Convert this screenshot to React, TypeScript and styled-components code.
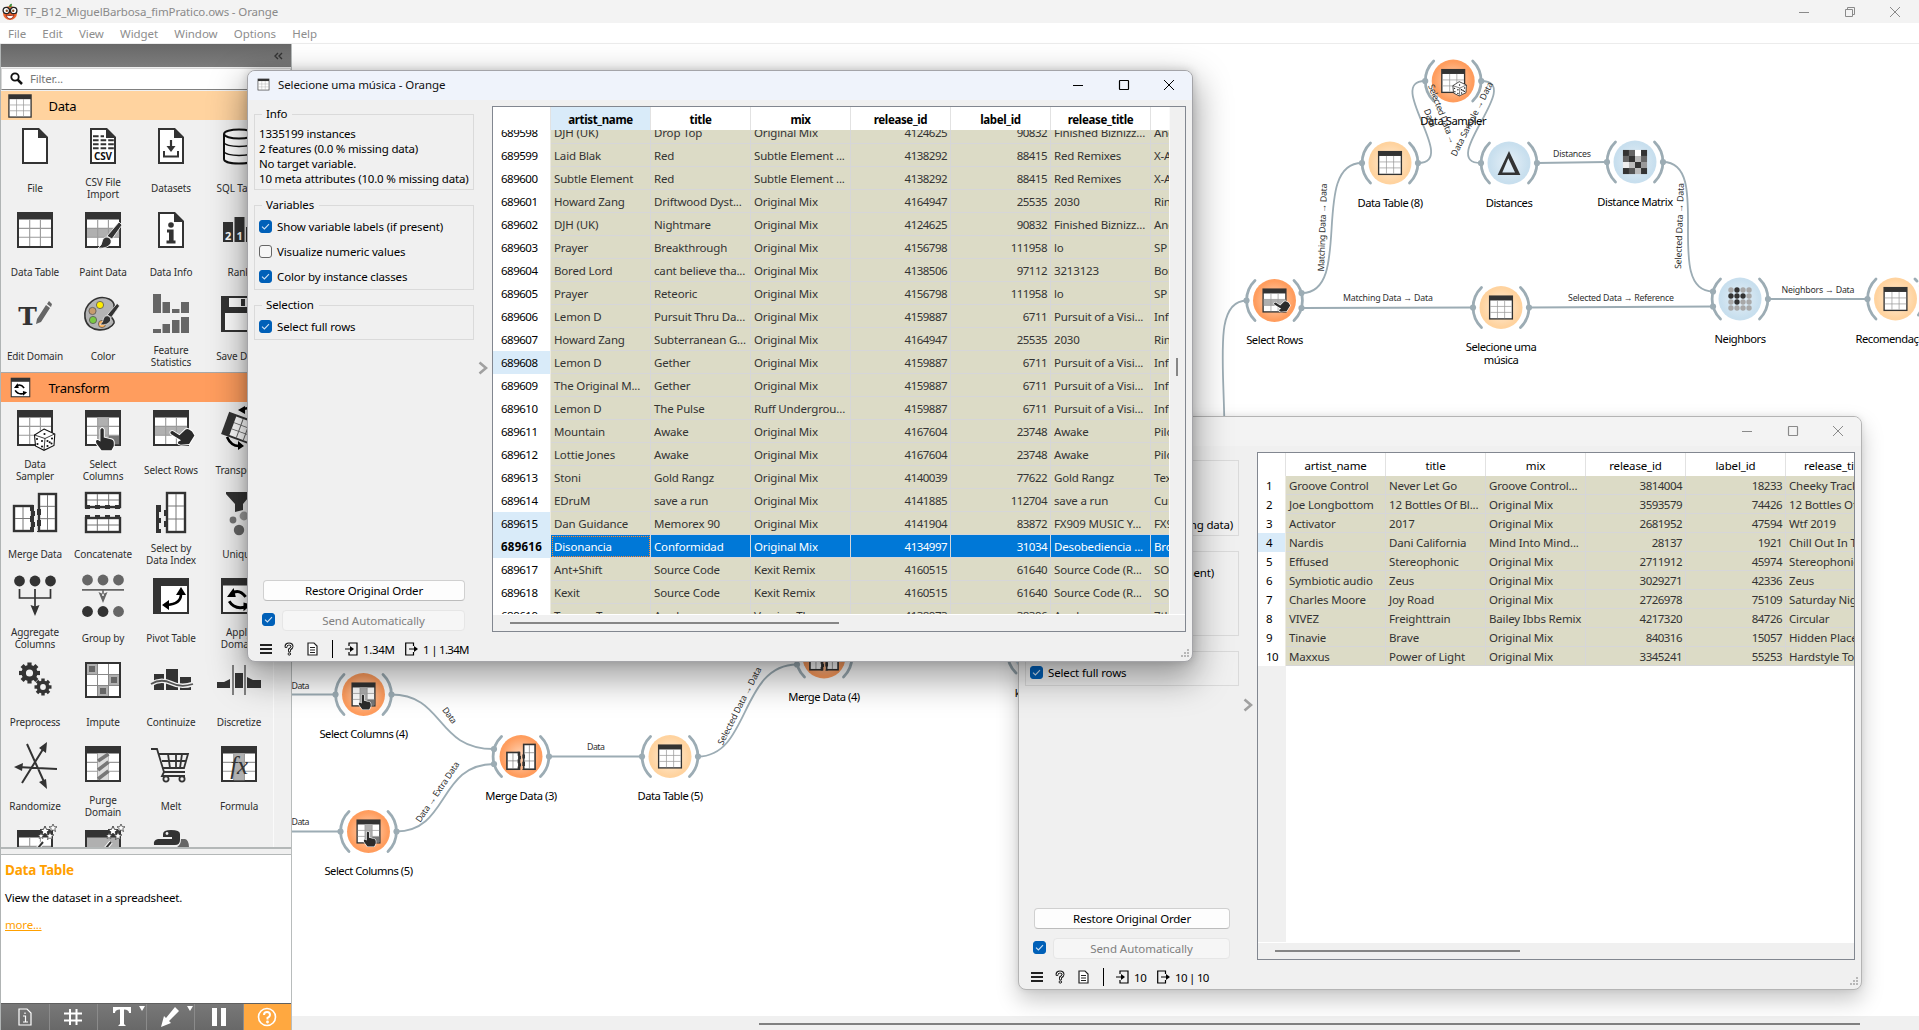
import React from "react";
import styled, { createGlobalStyle, css } from "styled-components";

const INK = "#333333";
const LINK = "#9cacb4";

const GlobalStyle = createGlobalStyle`
  * { box-sizing: border-box; }
  body {
    margin: 0;
    overflow: hidden;
    font-family: "Noto Sans", "Open Sans", sans-serif;
    font-size: 11.5px;
    letter-spacing: -0.2px;
    color: #000;
    background: #fff;
  }
`;

/* ---------- glyph helpers ---------- */

type Cell = [number, number, string];

function TableGlyph({ fills = [], grid = "#9a9a9a" }: { fills?: Cell[]; grid?: string }) {
  const xs = [-16, -5.2, 5.4];
  const ys = [-10.5, -1.5, 7.5];
  return (
    <g>
      <rect x={-18} y={-18} width={36} height={36} fill={INK} />
      <rect x={-16} y={-10.5} width={32} height={26.5} fill="#fff" />
      {fills.map(([c, r, f], i) => (
        <rect key={i} x={xs[c]} y={ys[r]} width={10.8} height={8.8} fill={f} />
      ))}
      <path d="M-5.3-10.5V16M5.4-10.5V16M-16-1.6H16M-16 7.3H16" stroke={grid} strokeWidth={1.1} />
    </g>
  );
}

const PageGlyph = () => (
  <g>
    <path d="M-13-18H4L13-9V18H-13Z" fill={INK} />
    <path d="M-11-16H3V-8H11V16H-11Z" fill="#fff" />
    <path d="M3-18L13-8H3Z" fill={INK} />
  </g>
);

const Hand = ({ t }: { t: string }) => (
  <path
    transform={t}
    d="M-2.6 1.5Q-1-1.5.8 1.5V9.5L7 11Q11 11.5 10.8 15V18L8.5 22.3H-1.5L-6.5 15.5Q-8 11.5-5 12L-2.6 13.5Z"
    fill="#2b2b2b"
    stroke="#fff"
    strokeWidth={1.8}
    style={{ paintOrder: "stroke" }}
  />
);

const Brush = ({ t }: { t?: string }) => (
  <g transform={t}>
    <path d="M16-8L19-5L9 9L4 6Z" fill={INK} stroke="#fff" strokeWidth={0.8} />
    <path d="M4 7Q9 8 8 13Q5 19-5 18Q-1 15-1 12Q0 7 4 7Z" fill={INK} stroke="#fff" strokeWidth={0.8} />
  </g>
);

const Dice = () => (
  <g transform="translate(9 11.500)">
    <path d="M0-10.5L10.8-5.5L10 6L0 10.8L-9-6.500L0-10.500ZM-9-6.500L-8.500 6.500L0 10.800" fill="#fff" />
    <path d="M0-10.500L10.800-5.500L10 6L0 10.800L-8.500 6.500L-9.500-4.500Z" fill="#fff" stroke="#111" strokeWidth={1.100} />
    <path d="M-9.5-4.5L1-1L10.5-5.5M1-1L0 10.5" fill="none" stroke="#111" strokeWidth={0.8} />
    {[[0.5, -5.5], [-7, -0.5], [-2, 1.5], [-6.5, 4.5], [-2, 7], [3.5, 1.5], [8, -1], [3.5, 6.5], [7.5, 4], [5.7, 2.7]].map(([x, y], i) => (
      <circle key={i} cx={x} cy={y} r={1.05} fill="#111" />
    ))}
  </g>
);

const CycleArrows = ({ t }: { t?: string }) => (
  <g transform={t} fill="none" stroke="#000" strokeWidth={2.6}>
    <path d="M-6-4Q1-9 7-1" />
    <path d="M7 8Q-3 11-8 3" />
    <path d="M-10-1L-4-9L-2-1ZM12 6L5 4L5 12Z" fill="#000" stroke="none" />
  </g>
);

const Notched = ({ x, y, w, h, cols, rows }: { x: number; y: number; w: number; h: number; cols: number; rows: number }) => (
  <g>
    <rect x={x} y={y} width={w} height={h} fill="#fff" stroke={INK} strokeWidth={2.4} />
    {Array.from({ length: cols - 1 }, (_, i) => (
      <path key={"c" + i} d={`M${x + (w * (i + 1)) / cols} ${y + 1}v${h - 2}`} stroke="#777" />
    ))}
    {Array.from({ length: rows - 1 }, (_, i) => (
      <path key={"r" + i} d={`M${x + 1} ${y + (h * (i + 1)) / rows}h${w - 2}`} stroke="#777" />
    ))}
  </g>
);

const MergeGlyph = () => (
  <g>
    <Notched x={-21} y={-6} w={18} h={25} cols={2} rows={2} />
    <Notched x={4} y={-18} w={17} h={37} cols={2} rows={3} />
    <path d="M-3-7V20M4-3V20" stroke={INK} strokeWidth={4} strokeDasharray="6 5" />
    <path d="M-4-1h4v5h-4zM-4 10h4v5h-4z" fill={INK} />
  </g>
);

const Gear = ({ x, y, r }: { x: number; y: number; r: number }) => (
  <g transform={`translate(${x} ${y})`}>
    {Array.from({ length: 4 }, (_, i) => (
      <rect key={i} x={-r * 0.2} y={-r} width={r * 0.4} height={r * 2} fill={INK} transform={`rotate(${i * 45})`} />
    ))}
    <circle r={r * 0.76} fill={INK} />
    <circle r={r * 0.34} fill="#f0f0f0" />
  </g>
);

const Stars = () => (
  <g fill="#fff" stroke={INK} strokeWidth={0.9}>
    {[[10, -17, 5], [18, -20, 4], [15, -12, 4], [6, -12, 3]].map(([x, y, r], i) => (
      <path
        key={i}
        transform={`translate(${x} ${y}) scale(${r / 5})`}
        d="M0-5L1.5-1.6L5-1.5L2.2.8L3.2 4.4L0 2.4L-3.2 4.4L-2.2.8L-5-1.5L-1.5-1.6Z"
      />
    ))}
    <path d="M8-6L-2 6" stroke="#fff" strokeWidth={4} />
    <path d="M8-6L-2 6" stroke={INK} strokeWidth={2} />
  </g>
);

const glyphs: Record<string, React.ReactNode> = {
  file: <PageGlyph />,
  csv: (
    <g>
      <PageGlyph />
      <path d="M-10-9.7H1M-10-5.7H11M-10-1.7H11M-10 2.3H11" stroke={INK} strokeWidth={2} strokeDasharray="5.6 2" />
      <text y={14.2} textAnchor="middle" fontSize={10} fontWeight={700} fill="#111" letterSpacing={-0.2}>CSV</text>
    </g>
  ),
  datasets: (
    <g>
      <PageGlyph />
      <path d="M-7 5V10.5H7V5" fill="none" stroke={INK} strokeWidth={2} />
      <path d="M0-6V3" stroke={INK} strokeWidth={2.2} />
      <path d="M-4.5 0H4.5L0 6Z" fill={INK} />
    </g>
  ),
  sql: (
    <g fill="#fff" stroke="#111" strokeWidth={2}>
      <path d="M-15-12V13C-15 19 15 19 15 13V-12" />
      <ellipse cy={-12} rx={15} ry={4.5} />
      <path d="M-15-4C-15 2 15 2 15-4M-15 5C-15 11 15 11 15 5" fill="none" strokeWidth={1.4} />
    </g>
  ),
  table: <TableGlyph />,
  paint: (
    <g>
      <TableGlyph fills={[[0, 1, "#b0b0b0"], [1, 1, "#b0b0b0"], [2, 1, "#b0b0b0"]]} />
      <Brush />
    </g>
  ),
  info: (
    <g>
      <PageGlyph />
      <circle cy={-5} r={2.8} fill={INK} />
      <path d="M-4-.5H2.6V10.5H4.5V13.5H-4.5V10.5H-2V2.5H-4Z" fill={INK} />
    </g>
  ),
  rank: (
    <g fill={INK}>
      <path d="M-16-8H-6V12H-16ZM-4.500-13H5.500V12H-4.500ZM7-3H17V12H7Z" />
      <g fill="#fff" fontSize={11} fontWeight={700} textAnchor="middle">
        <text x={-11} y={9.5}>2</text>
        <text x={0.5} y={9.5}>1</text>
        <text x={12} y={9.5}>3</text>
      </g>
    </g>
  ),
  editDomain: (
    <g>
      <text x={-7.500} y={11} textAnchor="middle" fontFamily="DejaVu Serif, serif" fontWeight={700} fontSize={25} fill={INK}>T</text>
      <path d="M2 5L11-9L15-6L6 8L1 10ZM12-10L14-13L17-10L16-7Z" fill="#666" />
    </g>
  ),
  color: (
    <g>
      <path d="M-18 4C-20-10-6-20 6-15C14-11 11-4 8-2C4 2 12 4 11 9C7 18-15 20-18 4Z" fill="#b4b4b4" stroke="#333" strokeWidth={1.6} />
      <circle cx={-3} cy={-9} r={3.6} fill="#ffed00" stroke="#555" strokeWidth={0.8} />
      <circle cx={-10.500} cy={-3} r={3.6} fill="#c69c6d" stroke="#555" strokeWidth={0.8} />
      <circle cx={-10} cy={6} r={3.6} fill="#7ac943" stroke="#555" strokeWidth={0.8} />
      <circle cx={-1} cy={10} r={3.6} fill="#ffb055" stroke="#555" strokeWidth={0.8} />
      <Brush t="translate(1 -4) scale(.82)" />
    </g>
  ),
  stats: (
    <path d="M-18-20H-10V-1H-18ZM-8.500-12H-1V-1H-8.500ZM1-5H8.500V-1H1ZM10-12H18V-1H10ZM-18 15H-10V19H-18ZM-8.500 10H-1V19H-8.500ZM1 6H8.500V19H1ZM10 3H18V19H10Z" fill="#666" />
  ),
  save: (
    <g>
      <path d="M-18-18H14L18-14V18H-18Z" fill={INK} />
      <path d="M-10-16H10V-7H-10ZM-14-1H14V16H-14Z" fill="#fff" />
      <path d="M2-15H6V-8H2Z" fill={INK} />
    </g>
  ),
  sampler: (
    <g>
      <TableGlyph />
      <Dice />
    </g>
  ),
  selectCols: (
    <g>
      <TableGlyph fills={[[1, 0, "#b0b0b0"], [1, 1, "#b0b0b0"], [1, 2, "#b0b0b0"], [2, 2, "#777"]]} />
      <Hand t="" />
    </g>
  ),
  selectRows: (
    <g>
      <TableGlyph fills={[[0, 1, "#b0b0b0"], [1, 1, "#b0b0b0"], [2, 1, "#b0b0b0"]]} />
      <Hand t="translate(0 3) rotate(-58)" />
    </g>
  ),
  transpose: (
    <g>
      <g transform="rotate(20) scale(.82 .66)">
        <rect x={-18} y={-18} width={40} height={36} fill={INK} />
        <path d="M-8-15H20V15H-8Z" fill="#fff" />
        <path d="M1-15V15M10-15V15M-8-5H20M-8 5H20" stroke="#666" strokeWidth={1.2} />
      </g>
      <path d="M15-17Q8-22 4-18M-12 9Q-8 18 0 18" fill="none" stroke="#000" strokeWidth={2.6} />
      <path d="M-1-18L6-22L6-14ZM5 18L-1 13L-1 22Z" />
    </g>
  ),
  merge: <MergeGlyph />,
  concat: (
    <g>
      <Notched x={-17} y={-19} w={34} h={14} cols={3} rows={2} />
      <Notched x={-17} y={6} w={34} h={14} cols={3} rows={2} />
      <path d="M-18-5H18M-18 5H18" stroke={INK} strokeWidth={4} strokeDasharray="5 5" />
      <path d="M-15-2H15M-13 2H15" stroke="#f0f0f0" strokeWidth={2} />
    </g>
  ),
  byIndex: (
    <g>
      <Notched x={-4} y={-19} w={18} h={39} cols={2} rows={3} />
      <path d="M-15-7V21H-10V17H-12V11H-10V6H-12V0H-10V-7Z" fill={INK} />
      <path d="M-7-2h4v6h-4zM-7 9h4v6h-4z" fill={INK} />
    </g>
  ),
  unique: (
    <g>
      <path d="M-13-20H14L4-8V-2L-4 0V-8L-13-18Z" fill={INK} />
      <circle cx={-6} cy={8} r={3.4} fill="#777" />
      <circle cx={5} cy={4} r={4.4} fill="#999" />
      <circle cx={0} cy={18} r={5.2} fill="#666" />
    </g>
  ),
  aggregate: (
    <g>
      <g fill={INK}>
        <circle cx={-15.500} cy={-15} r={5.4} />
        <circle cx={0} cy={-15} r={5.4} />
        <circle cx={15.500} cy={-15} r={5.4} />
      </g>
      <path d="M-15.500-7V2H15.500V-7M0-7V12" fill="none" stroke={INK} strokeWidth={1.7} />
      <path d="M-4.500 9L0 20L4.500 9L0 10.500Z" fill={INK} />
    </g>
  ),
  groupBy: (
    <g>
      <g fill="#666">
        <circle cx={-15.500} cy={-16} r={5.400} />
        <circle cx={0} cy={-16} r={5.400} />
        <circle cx={15.500} cy={-16} r={5.400} />
        <circle cx={15.500} cy={15.500} r={5.400} />
        <path d="M-21-7H21V-5.300H-21ZM-.8-6H.8V0H-.8ZM-4.500-4L0 7L4.500-4L0-2Z" />
      </g>
      <circle cx={-15.500} cy={15.500} r={5.400} fill={INK} />
      <circle cx={0} cy={15.500} r={5.400} fill={INK} />
    </g>
  ),
  pivot: (
    <g>
      <rect x={-18} y={-18} width={36} height={36} fill={INK} />
      <rect x={-10} y={-10} width={26} height={26} fill="#fff" />
      <path d="M-4 9Q10 8 10-2" fill="none" stroke="#000" strokeWidth={2.600} />
      <path d="M-9 9L-2 4L-2 14ZM10-9L5-1L15-1Z" />
    </g>
  ),
  apply: (
    <g>
      <rect x={-18} y={-18} width={36} height={36} fill={INK} />
      <rect x={-16} y={-10.500} width={32} height={26.500} fill="#fff" />
      <CycleArrows t="translate(-1 2) scale(1.1)" />
    </g>
  ),
  preprocess: (
    <g>
      <Gear x={-5.500} y={-7} r={10.500} />
      <Gear x={8} y={7} r={8.500} />
    </g>
  ),
  impute: (
    <g>
      <rect x={-18} y={-18} width={36} height={36} fill={INK} />
      <rect x={-16} y={-16} width={32} height={32} fill="#fff" />
      <path d="M-16-16H-5V-6H-16ZM5-6H16V5H5ZM-5 5H5V16H-5Z" fill="#b0b0b0" />
      <path d="M-5.500-16V16M5.500-16V16M-16-5.500H16M-16 5.500H16" stroke="#888" />
      <path d="M-14-14H-8V-8H-14ZM8-3H14V3H8ZM-3 8H3V14H-3Z" fill="#666" />
    </g>
  ),
  continuize: (
    <g>
      <path d="M-17-6H-7V10H-17ZM-5-11H7V10H-5ZM9-3H20V10H9Z" fill={INK} />
      <path d="M-20 4Q-10-2 0 3T22 4" fill="none" stroke="#f0f0f0" strokeWidth={4.500} />
      <path d="M-20 4Q-10-2 0 3T22 4" fill="none" stroke="#555" strokeWidth={1.800} />
    </g>
  ),
  discretize: (
    <g>
      <path d="M-22 2H-15L-9-1V8H-22ZM-4-7H4V8H-4ZM8-3L14 0H22V8H8Z" fill={INK} />
      <path d="M-6-15V15M6-15V15" stroke="#666" strokeWidth={1.600} />
    </g>
  ),
  randomize: (
    <g stroke={INK} strokeWidth={2} fill={INK}>
      <path d="M-8-20L10 20M-13 19L10-18M22 5L-18 3" fill="none" />
      <path d="M12 25L4 18L11 15ZM12-22L11-11L4-16ZM-21 3L-12-1L-13 7Z" stroke="none" />
    </g>
  ),
  purge: (
    <g>
      <TableGlyph />
      <rect x={-5} y={-10.500} width={10.500} height={26.500} fill="#ddd" />
      <path d="M-5-3L5.500-10M-5 6L5.500-2M-5 15L5.500 7" stroke="#777" strokeWidth={3.500} />
    </g>
  ),
  melt: (
    <g fill="none" stroke={INK} strokeWidth={1.800}>
      <path d="M-20-15H-14L-7 8H14M-12-10H17L13 4H-8M-9-3H15M-3-10L-1 4M5-10V4M11-10L9 4M-7 8L-9 12H14" />
      <circle cx={-5} cy={15} r={2.600} />
      <circle cx={11} cy={15} r={2.600} />
    </g>
  ),
  formula: (
    <g>
      <TableGlyph fills={[[1, 0, "#b0b0b0"], [1, 1, "#b0b0b0"], [1, 2, "#b0b0b0"]]} />
      <text y={10} textAnchor="middle" fontFamily="Liberation Serif, serif" fontStyle="italic" fontSize={25} fill={INK}>fx</text>
    </g>
  ),
  wandA: (
    <g>
      <TableGlyph />
      <Stars />
    </g>
  ),
  wandB: (
    <g>
      <rect x={-18} y={-18} width={36} height={36} fill={INK} />
      <rect x={-16} y={-10.500} width={32} height={26} fill="#b0b0b0" />
      <Stars />
    </g>
  ),
  python: (
    <g>
      <path d="M-8-14Q-8-18 0-18Q9-18 9-14V-8Q9-3 4-3H-17Q-18-8-13-9H1V-11H-8Z" fill={INK} />
      <path d="M10-9H14Q18-8 18 0H4Q10-2 10-9Z" fill="#666" />
      <circle cx={-4} cy={-14.500} r={1.400} fill="#f0f0f0" />
    </g>
  ),
  delta: <path fillRule="evenodd" d="M0-18L17 18H-17ZM-1-7L-10 14H9Z" fill={INK} />,
  matrix: (
    <g>
      {["#333", "#666", "#fff", "#333", "#666", "#333", "#bbb", "#666", "#eee", "#bbb", "#333", "#999", "#333", "#555", "#bbb", "#333"].map((f, i) => (
        <rect key={i} x={-18 + (i % 4) * 9} y={-18 + Math.floor(i / 4) * 9} width={9} height={9} fill={f} />
      ))}
    </g>
  ),
  neighbors: (
    <g>
      {Array.from({ length: 16 }, (_, i) => (
        <circle
          key={i}
          cx={-13.500 + (i % 4) * 9}
          cy={-13.500 + Math.floor(i / 4) * 9}
          r={4}
          fill={[1, 4, 5, 6, 9].includes(i) ? INK : "#a8a8a8"}
        />
      ))}
    </g>
  ),
};

const GlyphSvg = styled.svg`
  display: block;
  flex: none;
  overflow: visible;
`;

const Glyph = ({ name, size = 46 }: { name: string; size?: number }) => (
  <GlyphSvg width={size} height={size} viewBox="-23 -23 46 46">{glyphs[name]}</GlyphSvg>
);

/* ---------- main frame ---------- */

const Frame = styled.div`
  position: relative;
  width: 1919px;
  height: 1030px;
  display: flex;
  flex-direction: column;
  overflow: hidden;
`;

const MainTitle = styled.header`
  height: 23px;
  flex: none;
  display: flex;
  align-items: center;
  padding-left: 1px;
  background: #f3f3f3;
  color: #8a8a8a;
  span { margin-left: 5px; flex: 1; letter-spacing: -0.13px; }
`;

const MenuBar = styled.nav`
  height: 21px;
  flex: none;
  display: flex;
  align-items: center;
  gap: 16.2px;
  padding-left: 8px;
  border-bottom: 1px solid #ececec;
  color: #8d8d8d;
  letter-spacing: -0.06px;
`;

const WinControls = styled.div<{ $color: string; $right: number }>`
  display: flex;
  gap: 33.5px;
  margin-right: ${(p) => p.$right}px;
  color: ${(p) => p.$color};
  svg { display: block; }
`;

function Controls({ color, right, restore }: { color: string; right: number; restore?: boolean }) {
  const s = { fill: "none", stroke: "currentColor", strokeWidth: 1 };
  return (
    <WinControls $color={color} $right={right}>
      <svg width={12} height={12} {...s}><path d="M1 6.500H11" /></svg>
      <svg width={12} height={12} {...s}>
        {restore ? <path d="M1.500 3.500H8.500V10.500H1.500ZM3.500 3.500V1.500H10.500V8.500H8.500" /> : <rect x={1.500} y={1.500} width={9} height={9} rx={0.500} strokeWidth={1.200} />}
      </svg>
      <svg width={12} height={12} {...s}><path d="M1 1L11 11M11 1L1 11" /></svg>
    </WinControls>
  );
}

const Body = styled.div`
  flex: 1;
  min-height: 0;
  display: flex;
`;

/* ---------- sidebar ---------- */

const Sidebar = styled.aside`
  width: 292px;
  flex: none;
  display: flex;
  flex-direction: column;
  background: #f0f0f0;
  border-left: 1px solid #b0b4b4;
  border-right: 1px solid #b8bcbc;
`;

const DockHeader = styled.div`
  height: 23px;
  flex: none;
  display: flex;
  justify-content: flex-end;
  align-items: center;
  padding-right: 8px;
  background: linear-gradient(#686868, #7c7c7c);
`;

const FilterBox = styled.div`
  height: 22px;
  flex: none;
  display: flex;
  align-items: center;
  gap: 7px;
  margin: 1px 0;
  padding: 0 0 2px 8px;
  background: #fff;
  border: 1px solid #d8d8d8;
  border-bottom: 1px solid #808080;
  color: #777;
`;

const CategoryBar = styled.div<{ $bg: string }>`
  height: 29px;
  flex: none;
  display: flex;
  align-items: center;
  padding-left: 4px;
  background: ${(p) => p.$bg};
  font-size: 13px;
  letter-spacing: -0.25px;
`;

const CategoryIcon = styled.div`
  width: 30px;
  display: flex;
  justify-content: center;
  margin-right: 13.5px;
`;

const WidgetArea = styled.div`
  height: 756px;
  flex: none;
  overflow: hidden;
`;

const WidgetGrid = styled.div<{ $line?: boolean }>`
  display: grid;
  grid-template-columns: repeat(4, 68px);
  grid-auto-rows: 84px;
  width: 273px;
  border-right: 1px solid #fafafa;
  border-bottom: ${(p) => (p.$line ? "1px solid #a8a8a8" : "none")};
`;

const Tile = styled.div`
  display: flex;
  flex-direction: column;
  align-items: center;
  padding-top: 3px;
`;

const TileLabel = styled.div`
  height: 32px;
  margin-top: 2.5px;
  display: flex;
  align-items: center;
  text-align: center;
  font-size: 10px;
  line-height: 12px;
  letter-spacing: -0.12px;
  white-space: pre;
  color: #2e2e2e;
`;

const Splitter = styled.div`
  height: 8px;
  flex: none;
  border-top: 2px solid #b4b8b8;
  border-bottom: 1px solid #b4b8b8;
`;

const DocPane = styled.div`
  height: 148px;
  flex: none;
  padding: 5px 4px;
  background: #fff;
  h4 { margin: 0; font-size: 13.5px; line-height: 20px; color: #ffa000; letter-spacing: -0.2px; }
  p { margin: 9px 0 10px; line-height: 18px; letter-spacing: -0.22px; }
  a { color: #ffa000; text-decoration: underline; }
`;

const ToolStrip = styled.div`
  flex: 1;
  display: flex;
  border-top: 1px solid #606060;
  background: linear-gradient(#787878, #686868);
`;

const Tool = styled.div<{ $active?: boolean }>`
  position: relative;
  flex: 1;
  display: flex;
  align-items: center;
  justify-content: center;
  border-right: 1px solid #8b8b8b;
  color: #fff;
  ${(p) => p.$active && css`background: #ffa840; border-right: none;`}
`;

const Caret = styled.i`
  position: absolute;
  top: 2px;
  right: 1px;
  border: 3px solid transparent;
  border-top: 5px solid #fff;
`;

type WidgetDef = [string, string];

const dataWidgets: WidgetDef[] = [
  ["file", "File"], ["csv", "CSV File\nImport"], ["datasets", "Datasets"], ["sql", "SQL Table"],
  ["table", "Data Table"], ["paint", "Paint Data"], ["info", "Data Info"], ["rank", "Rank"],
  ["editDomain", "Edit Domain"], ["color", "Color"], ["stats", "Feature\nStatistics"], ["save", "Save Data"],
];

const transformWidgets: WidgetDef[] = [
  ["sampler", "Data\nSampler"], ["selectCols", "Select\nColumns"], ["selectRows", "Select Rows"], ["transpose", "Transpose"],
  ["merge", "Merge Data"], ["concat", "Concatenate"], ["byIndex", "Select by\nData Index"], ["unique", "Unique"],
  ["aggregate", "Aggregate\nColumns"], ["groupBy", "Group by"], ["pivot", "Pivot Table"], ["apply", "Apply\nDomain"],
  ["preprocess", "Preprocess"], ["impute", "Impute"], ["continuize", "Continuize"], ["discretize", "Discretize"],
  ["randomize", "Randomize"], ["purge", "Purge\nDomain"], ["melt", "Melt"], ["formula", "Formula"],
  ["wandA", ""], ["wandB", ""], ["python", ""],
];

const Tiles = ({ items, line }: { items: WidgetDef[]; line?: boolean }) => (
  <WidgetGrid $line={line}>
    {items.map(([icon, label]) => (
      <Tile key={icon}>
        <Glyph name={icon} />
        <TileLabel>{label}</TileLabel>
      </Tile>
    ))}
  </WidgetGrid>
);

function ToolDock() {
  return (
    <Sidebar>
      <DockHeader>
        <svg width={9} height={8} fill="none" stroke="#333" strokeWidth={1.400}><path d="M4 1L1 4L4 7M8 1L5 4L8 7" /></svg>
      </DockHeader>
      <FilterBox>
        <svg width={13} height={13} fill="none" stroke="#111"><circle cx={5} cy={5} r={3.700} strokeWidth={1.800} /><path d="M7.500 7.500L12 12" strokeWidth={2.500} /></svg>
        Filter...
      </FilterBox>
      <WidgetArea>
        <CategoryBar $bg="#ffd39f">
          <CategoryIcon><Glyph name="table" size={30} /></CategoryIcon>
          <span>Data</span>
        </CategoryBar>
        <Tiles items={dataWidgets} line />
        <CategoryBar $bg="#ff9d5e">
          <CategoryIcon><Glyph name="apply" size={25} /></CategoryIcon>
          <span>Transform</span>
        </CategoryBar>
        <Tiles items={transformWidgets} />
      </WidgetArea>
      <Splitter />
      <DocPane>
        <h4>Data Table</h4>
        <p>View the dataset in a spreadsheet.</p>
        <a>more...</a>
      </DocPane>
      <ToolStrip>
        <Tool>
          <svg width={14} height={18} fill="none" stroke="#fff" strokeWidth={1.200}><path d="M1 1H9L13 5V17H1ZM5 8H7.500V14M5 14H10M7 4.500V6" /></svg>
        </Tool>
        <Tool>
          <svg width={18} height={18} stroke="#fff" strokeWidth={2}><path d="M6 1V17M12.500 1V17M0 5.500H18M0 12.500H18" /></svg>
        </Tool>
        <Tool>
          <svg width={20} height={20} fill="#fff"><path d="M1 0H19V6H17Q17 2.500 12 2.500V17L14 19H6L8 17V2.500Q3 2.500 3 6H1Z" /></svg>
          <Caret />
        </Tool>
        <Tool>
          <svg width={20} height={20} fill="#fff"><path d="M15 0L19 4L9 14L11 16L1 20L4 9L6 11Z" /></svg>
          <Caret />
        </Tool>
        <Tool>
          <svg width={16} height={18} fill="#fff"><path d="M1 0H6V18H1ZM10 0H15V18H10Z" /></svg>
        </Tool>
        <Tool $active>
          <svg width={20} height={20} fill="none" stroke="#fff" strokeWidth={1.600}><circle cx={10} cy={10} r={8.500} /><path d="M7 8Q7 5 10 5T13 8Q13 9.500 10.500 10.800V12.500" strokeWidth={2} /><circle cx={10.500} cy={15} r={0.600} /></svg>
        </Tool>
      </ToolStrip>
    </Sidebar>
  );
}

/* ---------- workflow canvas ---------- */

const CanvasColumn = styled.main`
  flex: 1;
  min-width: 0;
  display: flex;
  flex-direction: column;
`;

const CanvasSvg = styled.svg`
  display: block;
  flex: none;
  background: #fff;
`;

const CanvasScroll = styled.div`
  flex: 1;
  display: flex;
  align-items: center;
  padding: 2px 0 0 467px;
  background: #f0f0f0;
  &::after { content: ""; width: 1101px; height: 2px; background: #808080; }
`;

type NodeDef = { x: number; y: number; icon: string; tone: string; label: string[]; l?: number[]; r?: number[] };

const nodes: NodeDef[] = [
  { x: 1453.200, y: 81, icon: "sampler", tone: "orange", label: ["Data Sampler"], l: [0], r: [0] },
  { x: 1390, y: 163, icon: "table", tone: "sand", label: ["Data Table (8)"], l: [0], r: [0] },
  { x: 1509, y: 163, icon: "delta", tone: "blue", label: ["Distances"], l: [0], r: [0] },
  { x: 1635, y: 162, icon: "matrix", tone: "blue", label: ["Distance Matrix"], l: [0], r: [0] },
  { x: 1274.500, y: 300.500, icon: "selectRows", tone: "orange", label: ["Select Rows"], l: [0], r: [-7.500, 7.500] },
  { x: 1501, y: 307.500, icon: "table", tone: "sand", label: ["Selecione uma", "música"], l: [0], r: [0] },
  { x: 1740, y: 299, icon: "neighbors", tone: "blue", label: ["Neighbors"], l: [-7.500, 7.500], r: [0] },
  { x: 1895.500, y: 299, icon: "table", tone: "sand", label: ["Recomendações"], l: [0], r: [] },
  { x: 363.500, y: 694.500, icon: "selectCols", tone: "orange", label: ["Select Columns (4)"], l: [0], r: [0] },
  { x: 368.500, y: 831.500, icon: "selectCols", tone: "orange", label: ["Select Columns (5)"], l: [0], r: [0] },
  { x: 521, y: 756.500, icon: "merge", tone: "orange", label: ["Merge Data (3)"], l: [-7.500, 7.500], r: [0] },
  { x: 670, y: 756.500, icon: "table", tone: "sand", label: ["Data Table (5)"], l: [0], r: [0] },
  { x: 824, y: 657, icon: "merge", tone: "orange", label: ["Merge Data (4)"], l: [-7.500, 7.500], r: [0] },
  { x: 1035.500, y: 653, icon: "table", tone: "blue", label: ["k-Means"], l: [0], r: [0] },
];

const links = [
  "M1302 293C1354 293 1309 163 1362 163",
  "M1302 308L1473 307.500",
  "M1418 163C1460 163 1384 81 1425 81",
  "M1481 81C1526 81 1436 163 1481 163",
  "M1537 163L1607 162",
  "M1663 162C1714 162 1662 291.500 1713 291.500",
  "M1529 307.500L1713 306.500",
  "M1768 299H1867",
  "M1247 300.500C1212 300.500 1225 365 1224.500 440",
  "M291 694.500H336",
  "M291 831.500H341",
  "M391 694.500C445 694.500 435 749 494 749",
  "M396 831.500C449 831.500 438 764 494 764",
  "M549 756.500H642",
  "M698 756.500C750 756.500 740 664.500 797 664.500",
];

const linkLabels: [string, number, number, number, number][] = [
  ["Matching Data → Data", 1322.500, 227.500, -88, 88],
  ["Matching Data → Data", 1388, 298, 0, 90],
  ["Selected Data → Reference", 1621, 297.500, 0, 106],
  ["Neighbors → Data", 1818, 289.500, 0, 73],
  ["Distances", 1572, 153.500, 0, 38],
  ["Selected Data → Data", 1679.500, 226, -88, 86],
  ["Selected Data →", 1442, 114, 69, 63],
  ["Data", 1430, 118, 69, 19],
  ["Data Sample → Data", 1472, 119, -63, 82],
  ["Data", 300.500, 685.500, 0, 18],
  ["Data", 300.500, 821.500, 0, 18],
  ["Data", 596, 747, 0, 18],
  ["Data", 449.500, 715.500, 53, 18],
  ["Data → Extra Data", 437.500, 792, -56, 71],
  ["Selected Data → Data", 739.500, 706, -63, 86],
];

function WorkflowCanvas() {
  return (
    <CanvasColumn>
      <CanvasSvg width={1627} height={972} viewBox="292 44 1627 972">
        <defs>
          <radialGradient id="orange"><stop offset="0.200" stopColor="#ffcba8" /><stop offset="0.900" stopColor="#ff9d5e" /></radialGradient>
          <radialGradient id="sand"><stop offset="0.200" stopColor="#ffe8cd" /><stop offset="0.900" stopColor="#ffd39f" /></radialGradient>
          <radialGradient id="blue"><stop offset="0.200" stopColor="#dfecf5" /><stop offset="0.900" stopColor="#c8dfee" /></radialGradient>
        </defs>
        {links.map((d) => (
          <path key={d} d={d} fill="none" stroke={LINK} strokeWidth={1.800} />
        ))}
        {nodes.map((n) => (
          <g key={n.label[0]} transform={`translate(${n.x} ${n.y})`}>
            <circle r={21.500} fill={`url(#${n.tone})`} />
            <g transform="scale(.67)">{glyphs[n.icon]}</g>
            <path d="M-19.500-20A28 28 0 0 0-19.500 20" fill="none" stroke={LINK} strokeWidth={2.800} strokeLinecap="round" />
            <path d="M19.500-20A28 28 0 0 1 19.500 20" fill="none" stroke={LINK} strokeWidth={2.800} strokeLinecap="round" strokeDasharray={n.r?.length ? undefined : "3 6"} />
            {n.l?.map((y) => <circle key={y} cx={y ? -27 : -28} cy={y} r={3.100} fill={LINK} />)}
            {n.r?.map((y) => <circle key={y} cx={y ? 27 : 28} cy={y} r={3.100} fill={LINK} />)}
            {n.label.map((t, i) => (
              <text key={t} y={43.500 + i * 13} textAnchor="middle" fontSize={11.200} letterSpacing={-0.450}>{t}</text>
            ))}
          </g>
        ))}
        {linkLabels.map(([t, x, y, a, w], i) => (
          <text key={i} transform={`translate(${x} ${y}) rotate(${a})`} y={3} textAnchor="middle" textLength={w} fontSize={8.800} fill="#303030" letterSpacing={0}>{t}</text>
        ))}
      </CanvasSvg>
      <CanvasScroll />
    </CanvasColumn>
  );
}

/* ---------- table windows ---------- */

const Win = styled.section<{ $x: number; $y: number; $w: number; $h: number; $active?: boolean }>`
  position: absolute;
  left: ${(p) => p.$x}px;
  top: ${(p) => p.$y}px;
  width: ${(p) => p.$w}px;
  height: ${(p) => p.$h}px;
  display: flex;
  flex-direction: column;
  overflow: hidden;
  border: 1px solid ${(p) => (p.$active ? "#a4a4a8" : "#b4b4b4")};
  border-radius: 8px;
  background: #f0f0f0;
  box-shadow: ${(p) => (p.$active ? "0 14px 34px 4px rgba(0,0,0,.36), 0 0 10px rgba(0,0,0,.16)" : "0 10px 22px rgba(0,0,0,.22), 0 0 6px rgba(0,0,0,.08)")};
`;

const WinTitle = styled.header<{ $active?: boolean }>`
  height: 29px;
  flex: none;
  display: flex;
  align-items: center;
  padding: 0 0 2px 8px;
  background: ${(p) => (p.$active ? "#eff3fb" : "#f3f3f3")};
  color: ${(p) => (p.$active ? "#111" : "#8a8a8a")};
  span { flex: 1; margin-left: 7px; letter-spacing: -0.1px; }
`;

const WinBody = styled.div`
  flex: 1;
  min-height: 0;
  display: flex;
`;

const ControlPane = styled.div<{ $w: number }>`
  width: ${(p) => p.$w}px;
  flex: none;
  margin-left: 6px;
  padding-top: 6px;
  display: flex;
  flex-direction: column;
  gap: 7px;
`;

const Group = styled.fieldset<{ $h: number }>`
  height: ${(p) => p.$h}px;
  min-width: 0;
  margin: 0;
  padding: 0 0 0 4px;
  border: 1px solid #dadada;
  white-space: nowrap;
  letter-spacing: -0.14px;
  legend { margin-left: 3px; padding: 0 5px 0 4px; line-height: 16px; }
`;

const InfoText = styled.div`
  padding-top: 4px;
  line-height: 15px;
  letter-spacing: -0.19px;
`;

const CheckRow = styled.label`
  height: 25px;
  display: flex;
  align-items: center;
  gap: 5px;
  padding-top: 1px;
`;

const CheckMark = styled.span<{ $on: boolean }>`
  width: 13px;
  height: 13px;
  flex: none;
  display: flex;
  align-items: center;
  justify-content: center;
  border-radius: 3px;
  border: 1px solid ${(p) => (p.$on ? "#0060b8" : "#666")};
  background: ${(p) => (p.$on ? "#0060b8" : "#f6f6f6")};
`;

const Check = ({ on }: { on: boolean }) => (
  <CheckMark $on={on}>
    {on && <svg width={9} height={9} fill="none" stroke="#cfe2f5" strokeWidth={1.100}><path d="M1 4.700L3.400 7L8 2.200" /></svg>}
  </CheckMark>
);

const Actions = styled.div`
  margin-top: auto;
  padding: 0 9px 1px;
  display: flex;
  flex-direction: column;
  gap: 9px;
`;

const SendRow = styled.div`
  display: flex;
  align-items: flex-start;
  gap: 7px;
  margin-left: -1px;
  ${CheckMark} { margin-top: 3px; }
`;

const Button = styled.div<{ $off?: boolean }>`
  height: 21px;
  flex: ${(p) => (p.$off ? 1 : "none")};
  display: flex;
  align-items: center;
  justify-content: center;
  border: 1px solid ${(p) => (p.$off ? "#e6e6e6" : "#d0d0d0")};
  border-bottom-color: ${(p) => (p.$off ? "#e6e6e6" : "#bcbcbc")};
  border-radius: 4px;
  background: ${(p) => (p.$off ? "#f6f6f6" : "#fdfdfd")};
  color: ${(p) => (p.$off ? "#808080" : "#000")};
  letter-spacing: ${(p) => (p.$off ? -0.05 : -0.2)}px;
`;

const ChevronColumn = styled.div`
  width: 18px;
  flex: none;
  display: flex;
  align-items: center;
  padding: 4px 0 0 4px;
`;

const TableFrame = styled.div<{ $w: number }>`
  width: ${(p) => p.$w}px;
  flex: none;
  margin-top: 6px;
  display: flex;
  flex-direction: column;
  border: 1px solid #828790;
  background: #f0f0f0;
`;

const TableMain = styled.div`
  flex: 1;
  min-height: 0;
  display: flex;
  border-bottom: 1px solid #fff;
`;

const Viewport = styled.div`
  flex: 1;
  min-width: 0;
  display: flex;
  flex-direction: column;
  overflow: hidden;
  background: #fff;
`;

const VScroll = styled.div`
  width: 16px;
  flex: none;
  padding: 251px 0 0 6px;
  background: #f0f0f0;
  border-left: 1px solid #fafafa;
  &::after { content: ""; display: block; width: 2px; height: 18px; background: #868686; }
`;

const HScroll = styled.div<{ $x: number; $len: number }>`
  height: 16px;
  flex: none;
  padding: 7px 0 0 ${(p) => p.$x}px;
  &::after { content: ""; display: block; width: ${(p) => p.$len}px; height: 2px; background: #868686; }
`;

const gridCols = css<{ $rh: number }>`
  display: grid;
  grid-template-columns: ${(p) => p.$rh}px repeat(7, 100px);
`;

const HeadRow = styled.div<{ $rh: number; $bold?: boolean }>`
  ${gridCols}
  height: 23px;
  flex: none;
  position: relative;
  z-index: 1;
  background: #fff;
  font-weight: ${(p) => (p.$bold ? 700 : 400)};
  letter-spacing: ${(p) => (p.$bold ? -0.35 : -0.15)}px;
`;

const HeadCell = styled.div<{ $hot?: boolean }>`
  display: flex;
  align-items: center;
  justify-content: center;
  padding-top: 1px;
  border-right: 1px solid #e2e2e2;
  background: ${(p) => (p.$hot ? "#d9ebf9" : "#fff")};
`;

const RowsArea = styled.div<{ $shift: number; $rh: number }>`
  flex: 1;
  min-height: 0;
  margin-top: ${(p) => -p.$shift}px;
  background: linear-gradient(90deg, #f0f0f0 ${(p) => p.$rh}px, #fff 0);
`;

const Row = styled.div<{ $rh: number; $h: number }>`
  ${gridCols}
  height: ${(p) => p.$h}px;
  line-height: ${(p) => p.$h - 2}px;
`;

const RowNo = styled.div<{ $hot?: boolean; $bold?: boolean }>`
  padding: 1px 0 0 8px;
  border-right: 1px solid #eceae0;
  background: ${(p) => (p.$hot ? "#d9ebf9" : "#fff")};
  font-weight: ${(p) => (p.$bold ? 700 : 400)};
  letter-spacing: ${(p) => (p.$bold ? 0.25 : -0.5)}px;
`;

const DataCell = styled.div<{ $num?: boolean; $sel?: boolean; $focus?: boolean }>`
  padding: 1px ${(p) => (p.$num ? 3 : 2)}px 0 3px;
  overflow: hidden;
  text-overflow: ellipsis;
  white-space: nowrap;
  text-align: ${(p) => (p.$num ? "right" : "left")};
  letter-spacing: ${(p) => (p.$num ? -0.52 : -0.16)}px;
  border-right: 1px solid #d6d6d8;
  border-bottom: 1px solid #d6d6d8;
  color: ${(p) => (p.$sel ? "#fff" : "#333")};
  background: ${(p) => (p.$sel ? "#0078d7" : "#dcdbc6")};
  ${(p) => p.$focus && css`outline: 1px dotted #ff8728; outline-offset: -2px;`}
`;

const StatusBar = styled.footer`
  height: 29px;
  flex: none;
  display: flex;
  align-items: center;
  padding: 5px 2px 0 12px;
  white-space: pre;
  letter-spacing: -0.3px;
  svg { display: block; flex: none; }
`;

const StatusCell = styled.div<{ $w: number }>`
  width: ${(p) => p.$w}px;
  flex: none;
`;

const StatusOut = styled.div`
  letter-spacing: -0.7px;
`;

const StatusRule = styled.div`
  width: 1px;
  height: 18px;
  margin-right: 12px;
  background: #000;
`;

const Grip = styled.div`
  margin: 8px 0 0 auto;
`;

const columns = ["artist_name", "title", "mix", "release_id", "label_id", "release_title", ""];

type TableRow = [string, ...string[]];

const songs: TableRow[] = [
  ["689598", "DJH (UK)", "Drop Top", "Original Mix", "4124625", "90832", "Finished Biznizz...", "Anger"],
  ["689599", "Laid Blak", "Red", "Subtle Element ...", "4138292", "88415", "Red Remixes", "X-Audio"],
  ["689600", "Subtle Element", "Red", "Subtle Element ...", "4138292", "88415", "Red Remixes", "X-Audio"],
  ["689601", "Howard Zang", "Driftwood Dyst...", "Original Mix", "4164947", "25535", "2030", "Ring"],
  ["689602", "DJH (UK)", "Nightmare", "Original Mix", "4124625", "90832", "Finished Biznizz...", "Anger"],
  ["689603", "Prayer", "Breakthrough", "Original Mix", "4156798", "111958", "lo", "SP"],
  ["689604", "Bored Lord", "cant believe tha...", "Original Mix", "4138506", "97112", "3213123", "Bored"],
  ["689605", "Prayer", "Reteoric", "Original Mix", "4156798", "111958", "lo", "SP"],
  ["689606", "Lemon D", "Pursuit Thru Da...", "Original Mix", "4159887", "6711", "Pursuit of a Visi...", "Infra"],
  ["689607", "Howard Zang", "Subterranean G...", "Original Mix", "4164947", "25535", "2030", "Ring"],
  ["689608", "Lemon D", "Gether", "Original Mix", "4159887", "6711", "Pursuit of a Visi...", "Infra"],
  ["689609", "The Original M...", "Gether", "Original Mix", "4159887", "6711", "Pursuit of a Visi...", "Infra"],
  ["689610", "Lemon D", "The Pulse", "Ruff Undergrou...", "4159887", "6711", "Pursuit of a Visi...", "Infra"],
  ["689611", "Mountain", "Awake", "Original Mix", "4167604", "23748", "Awake", "Pilot"],
  ["689612", "Lottie Jones", "Awake", "Original Mix", "4167604", "23748", "Awake", "Pilot"],
  ["689613", "Stoni", "Gold Rangz", "Original Mix", "4140039", "77622", "Gold Rangz", "Text"],
  ["689614", "EDruM", "save a run", "Original Mix", "4141885", "112704", "save a run", "Curve"],
  ["689615", "Dan Guidance", "Memorex 90", "Original Mix", "4141904", "83872", "FX909 MUSIC Y...", "FX909"],
  ["689616", "Disonancia", "Conformidad", "Original Mix", "4134997", "31034", "Desobediencia ...", "Brood"],
  ["689617", "Ant+Shift", "Source Code", "Kexit Remix", "4160515", "61640", "Source Code (R...", "SOUL"],
  ["689618", "Kexit", "Source Code", "Kexit Remix", "4160515", "61640", "Source Code (R...", "SOUL"],
  ["689619", "Tommy Two", "Awake", "Version Theo", "4138973", "38396", "Awake", "7th"],
];

const picks: TableRow[] = [
  ["1", "Groove Control", "Never Let Go", "Groove Control...", "3814004", "18233", "Cheeky Tracks 01", ""],
  ["2", "Joe Longbottom", "12 Bottles Of Bl...", "Original Mix", "3593579", "74426", "12 Bottles Of Bl", ""],
  ["3", "Activator", "2017", "Original Mix", "2681952", "47594", "Wtf 2019", ""],
  ["4", "Nardis", "Dani California", "Mind Into Mind...", "28137", "1921", "Chill Out In The", ""],
  ["5", "Effused", "Stereophonic", "Original Mix", "2711912", "45974", "Stereophonic", ""],
  ["6", "Symbiotic audio", "Zeus", "Original Mix", "3029271", "42336", "Zeus", ""],
  ["7", "Charles Moore", "Joy Road", "Original Mix", "2726978", "75109", "Saturday Night", ""],
  ["8", "VIVEZ", "Freighttrain", "Bailey Ibbs Remix", "4217320", "84726", "Circular", ""],
  ["9", "Tinavie", "Brave", "Original Mix", "840316", "15057", "Hidden Places", ""],
  ["10", "Maxxus", "Power of Light", "Original Mix", "3345241", "55253", "Hardstyle Top", ""],
];

type TableWindowProps = {
  x: number; y: number; w: number; h: number;
  active?: boolean;
  title: string;
  paneW: number;
  tableW: number;
  info: string[];
  rows: TableRow[];
  rowH: number;
  rowHead: number;
  shift: number;
  hot: string[];
  selected?: string;
  scroll: [number, number];
  input: string;
  output: string;
  inputW: number;
};

function TableWindow(p: TableWindowProps) {
  return (
    <Win $x={p.x} $y={p.y} $w={p.w} $h={p.h} $active={p.active}>
      <WinTitle $active={p.active}>
        <Glyph name="table" size={15} />
        <span>{p.title}</span>
        <Controls color={p.active ? "#000" : "#8a8a8a"} right={17} />
      </WinTitle>
      <WinBody>
        <ControlPane $w={p.paneW}>
          <Group $h={84}>
            <legend>Info</legend>
            <InfoText>{p.info.map((t) => <div key={t}>{t}</div>)}</InfoText>
          </Group>
          <Group $h={93}>
            <legend>Variables</legend>
            <CheckRow><Check on />Show variable labels (if present)</CheckRow>
            <CheckRow><Check on={false} />Visualize numeric values</CheckRow>
            <CheckRow><Check on />Color by instance classes</CheckRow>
          </Group>
          <Group $h={43}>
            <legend>Selection</legend>
            <CheckRow><Check on />Select full rows</CheckRow>
          </Group>
          <Actions>
            <Button>Restore Original Order</Button>
            <SendRow>
              <Check on />
              <Button $off>Send Automatically</Button>
            </SendRow>
          </Actions>
        </ControlPane>
        <ChevronColumn>
          <svg width={10} height={14} fill="none" stroke="#a0a0a0" strokeWidth={2.600}><path d="M1.500 1.500L8 7L1.500 12.500" /></svg>
        </ChevronColumn>
        <TableFrame $w={p.tableW}>
          <TableMain>
            <Viewport>
              <HeadRow $rh={p.rowHead} $bold={p.active}>
                <HeadCell />
                {columns.map((c, i) => <HeadCell key={i} $hot={p.active && i === 0}>{c}</HeadCell>)}
              </HeadRow>
              <RowsArea $shift={p.shift} $rh={p.rowHead}>
                {p.rows.map(([no, ...cells]) => {
                  const sel = no === p.selected;
                  return (
                    <Row key={no} $rh={p.rowHead} $h={p.rowH}>
                      <RowNo $hot={p.hot.includes(no)} $bold={sel}>{no}</RowNo>
                      {cells.map((c, i) => (
                        <DataCell key={i} $num={i === 3 || i === 4} $sel={sel} $focus={sel && i === 0}>{c}</DataCell>
                      ))}
                    </Row>
                  );
                })}
              </RowsArea>
            </Viewport>
            {p.active && <VScroll />}
          </TableMain>
          <HScroll $x={p.scroll[0]} $len={p.scroll[1]} />
        </TableFrame>
      </WinBody>
      <StatusBar>
        <StatusCell $w={24}>
          <svg width={12} height={12} stroke="#222" strokeWidth={2}><path d="M0 2H12M0 6H12M0 10H12" /></svg>
        </StatusCell>
        <StatusCell $w={23}>
          <svg width={10} height={14} fill="none" strokeLinecap="round"><path d="M2 4.500Q2 2 5 2T8 4.500Q8 6 5.500 7.500V9" stroke="#222" strokeWidth={3} /><path d="M2 4.500Q2 2 5 2T8 4.500Q8 6 5.500 7.500V9" stroke="#fff" strokeWidth={1} /><circle cx={5.300} cy={12} r={1.200} stroke="#222" fill="#fff" /></svg>
        </StatusCell>
        <StatusCell $w={25}>
          <svg width={11} height={14} fill="#fff" stroke="#222" strokeWidth={1.200}><path d="M1 1H7L10 4V13H1ZM3 5.500H8M3 8H8M3 10.500H8" /></svg>
        </StatusCell>
        <StatusRule />
        <StatusCell $w={18}>
          <svg width={13} height={14} fill="none" stroke="#000" strokeWidth={1.200}><path d="M4 4V1H12V13H4V10M0 7H6" /><path d="M5 4L9 7L5 10Z" fill="#000" stroke="none" /></svg>
        </StatusCell>
        <StatusCell $w={p.inputW}>{p.input}</StatusCell>
        <StatusCell $w={18}>
          <svg width={13} height={14} fill="none" stroke="#000" strokeWidth={1.200}><path d="M8.500 4V1H.7V13H8.500V10M4 7H10" /><path d="M9 4L13 7L9 10Z" fill="#000" stroke="none" /></svg>
        </StatusCell>
        <StatusOut>{p.output}</StatusOut>
        <Grip>
          <svg width={9} height={9} fill="#b8b8b8"><path d="M6 0H8V2H6ZM3 3H5V5H3ZM6 3H8V5H6ZM0 6H2V8H0ZM3 6H5V8H3ZM6 6H8V8H6Z" /></svg>
        </Grip>
      </StatusBar>
    </Win>
  );
}

const MascotIcon = () => (
  <svg width={18} height={18} viewBox="0 0 18 18">
    <circle cx={9} cy={10} r={7} fill="#f0642c" />
    <path d="M8 4Q8 1 11 .8L10.500 4Z" fill="#3d8b37" />
    <circle cx={5.300} cy={7.500} r={3.200} fill="#fff" stroke="#222" strokeWidth={1.300} />
    <circle cx={12.700} cy={7.500} r={3.200} fill="#fff" stroke="#222" strokeWidth={1.300} />
    <circle cx={5.800} cy={7.700} r={1.200} fill="#8a4a22" />
    <circle cx={12.200} cy={7.700} r={1.200} fill="#8a4a22" />
    <path d="M5 12Q9 13 13 12Q12 16 9 16T5 12Z" fill="#fff" stroke="#8c2314" strokeWidth={0.900} />
  </svg>
);

export default function App() {
  return (
    <Frame>
      <GlobalStyle />
      <MainTitle>
        <MascotIcon />
        <span>TF_B12_MiguelBarbosa_fimPratico.ows - Orange</span>
        <Controls color="#8a8a8a" right={18} restore />
      </MainTitle>
      <MenuBar>
        {["File", "Edit", "View", "Widget", "Window", "Options", "Help"].map((m) => <div key={m}>{m}</div>)}
      </MenuBar>
      <Body>
        <ToolDock />
        <WorkflowCanvas />
      </Body>
      <TableWindow
        x={1018} y={416} w={844} h={574}
        title="Recomendações - Orange"
        paneW={214} tableW={598}
        info={["10 instances", "2 features (0.0 % missing data)", "No target variable.", "10 meta attributes (0.0 % missing data)"]}
        rows={picks} rowH={19} rowHead={28} shift={0}
        hot={["4"]}
        scroll={[17, 245]}
        input="10" output="10 | 10" inputW={23}
      />
      <TableWindow
        active
        x={247} y={70} w={946} h={592}
        title="Selecione uma música - Orange"
        paneW={220} tableW={694}
        info={["1335199 instances", "2 features (0.0 % missing data)", "No target variable.", "10 meta attributes (10.0 % missing data)"]}
        rows={songs} rowH={23} rowHead={58} shift={9}
        hot={["689608", "689615", "689616"]}
        selected="689616"
        scroll={[17, 329]}
        input="1.34M" output="1 | 1.34M" inputW={42}
      />
    </Frame>
  );
}
